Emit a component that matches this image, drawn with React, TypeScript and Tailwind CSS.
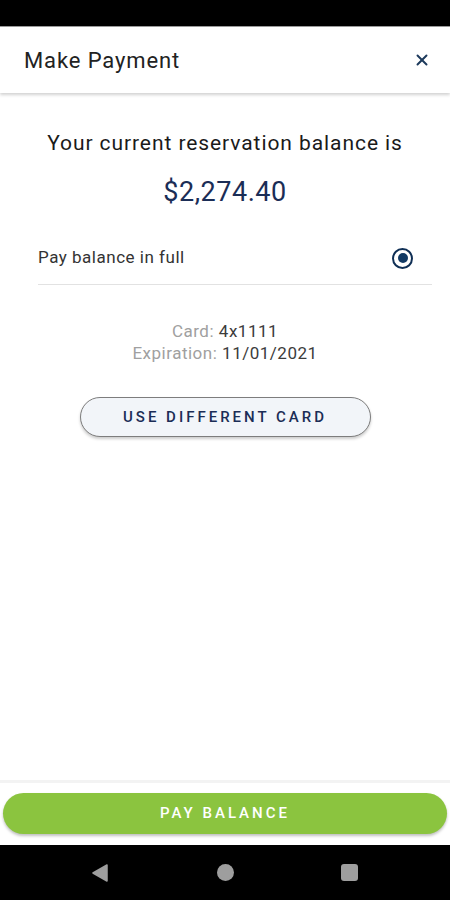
import { X } from "lucide-react";

export default function App() {
  return (
    <div
      className="w-[450px] h-[900px] flex flex-col bg-white overflow-hidden"
      style={{ fontFamily: "Roboto, 'Liberation Sans', sans-serif" }}
    >
      {/* status bar */}
      <div className="h-[26px] bg-black shrink-0" />

      {/* header */}
      <header className="h-[67px] shrink-0 flex items-center justify-between pl-[24px] pr-[19px] border-t border-[#9a9a9a] shadow-[0_2px_3px_rgba(0,0,0,0.18)] relative z-10">
        <h1 className="text-[22px] text-[#222] tracking-[0.04em]">Make Payment</h1>
        <X size={18} strokeWidth={2.6} className="text-[#1d3a5c]" />
      </header>

      <main className="flex-1 flex flex-col items-center">
        <p className="mt-[36px] text-[21px] leading-[28px] text-[#1a1a1a] tracking-[0.044em]">
          Your current reservation balance is
        </p>
        <p className="mt-[19px] text-[27px] leading-[32px] text-[#1b2d56] tracking-[0.02em]">$2,274.40</p>

        <div className="mt-[24px] self-start ml-[38px] w-[394px] h-[53px] flex items-center justify-between border-b border-[#e2e2e2]">
          <span className="text-[17px] text-[#333] tracking-[0.03em]">Pay balance in full</span>
          <span className="mr-[19px] w-[21px] h-[21px] rounded-full border-[2.5px] border-[#0f2f55] flex items-center justify-center">
            <span className="w-[10px] h-[10px] rounded-full bg-[#123a64]" />
          </span>
        </div>

        <div className="mt-[35px] flex flex-col items-center text-[17px] leading-[22px] tracking-[0.03em]">
          <p className="text-[#a0a0a0]">
            Card: <span className="text-[#3c3c3c]">4x1111</span>
          </p>
          <p className="text-[#a0a0a0]">
            Expiration: <span className="text-[#3c3c3c]">11/01/2021</span>
          </p>
        </div>

        <button className="mt-[33px] w-[291px] h-[40px] rounded-full bg-[#f2f5f9] border border-[#7d7d7d] shadow-[0_2px_3px_rgba(0,0,0,0.2)] text-[15px] font-medium tracking-[0.2em] text-[#1b2d56]">
          USE DIFFERENT CARD
        </button>
      </main>

      {/* footer */}
      <div className="shrink-0 border-t-[3px] border-[#f3f3f3] pt-[10px] pb-[11px] px-[3px]">
        <button className="w-full h-[41px] rounded-full bg-[#8bc43f] shadow-[0_2px_3px_rgba(0,0,0,0.25)] text-white text-[15px] font-medium tracking-[0.2em]">
          PAY BALANCE
        </button>
      </div>

      {/* nav bar */}
      <nav className="h-[55px] shrink-0 bg-black flex items-center">
        <div className="w-[450px] flex items-center">
          <svg className="ml-[92px]" width="16" height="18" viewBox="0 0 16 18">
            <path d="M15 1 L1 9 L15 17 Z" fill="#9e9e9e" stroke="#9e9e9e" strokeLinejoin="round" strokeWidth="1.5" />
          </svg>
          <span className="ml-[109px] w-[17px] h-[17px] rounded-full bg-[#9e9e9e]" />
          <span className="ml-[107px] w-[17px] h-[17px] rounded-[3px] bg-[#9e9e9e]" />
        </div>
      </nav>
    </div>
  );
}
